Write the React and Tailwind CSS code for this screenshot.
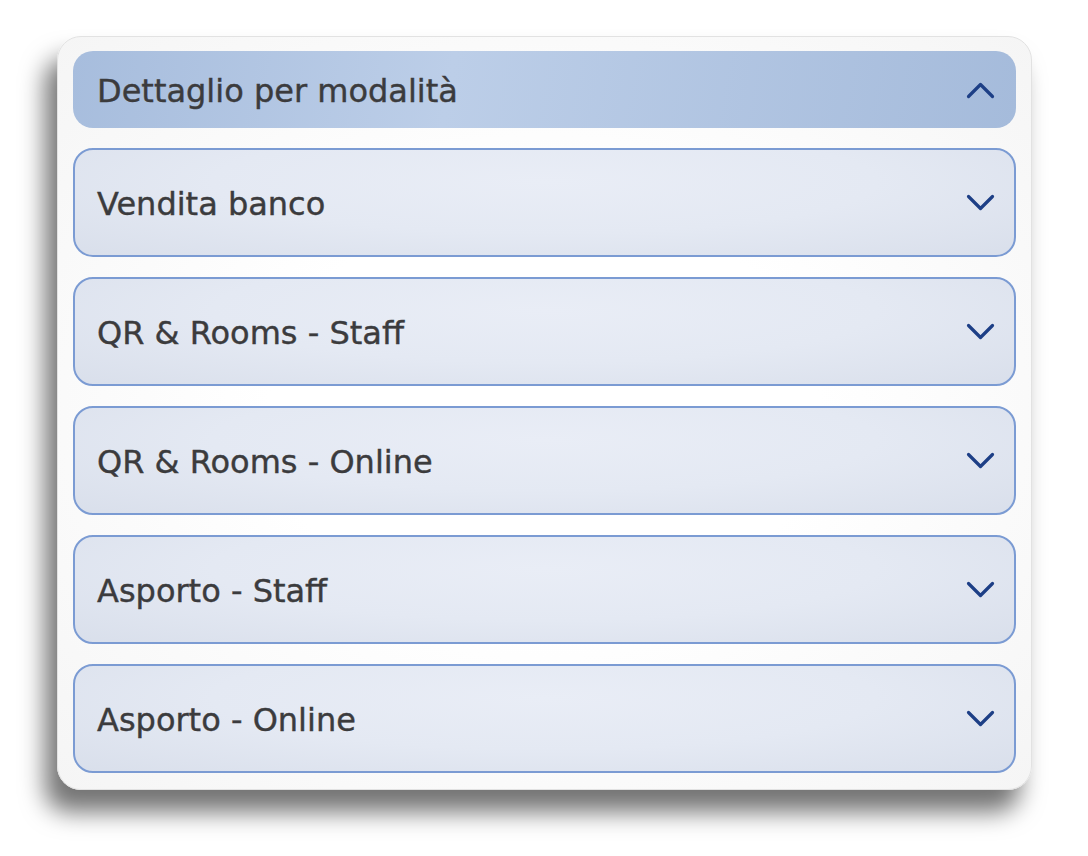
import React, {useState} from "react";

const items = [
    "Vendita banco",
    "QR & Rooms - Staff",
    "QR & Rooms - Online",
    "Asporto - Staff",
    "Asporto - Online",
];

const Chevron = ({up}) => (
    <svg width="30" height="30" viewBox="0 0 30 30" fill="none" stroke="#1d3f86" strokeWidth="3.2"
         strokeLinecap="round" strokeLinejoin="round">
        {up ? <path d="M3.5 21.5l12-12 12 12"/> : <path d="M3.5 8.5l12 12 12-12"/>}
    </svg>
);

const App = () => {
    const [open, setOpen] = useState(true);

    return (
        <div className="w-[1088px] h-[856px] bg-white pt-[36px] pl-[57px]"
             style={{fontFamily: '"DejaVu Sans", sans-serif'}}>
            <div
                className="w-[975px] rounded-[24px] border border-[#e2e2e2] bg-[radial-gradient(ellipse_at_center,#ffffff_40%,#f5f5f5_100%)] px-[15px] pt-[14px] pb-[16px] shadow-[-12px_22px_24px_rgba(0,0,0,0.55)]">
                <button
                    onClick={() => setOpen(!open)}
                    className="w-full h-[77px] rounded-[20px] flex items-center justify-between pl-[24px] pr-[21px] bg-[linear-gradient(100deg,#a7bddd_0%,#bccee8_40%,#a5bbdb_100%)]">
                    <span className="text-[32px] leading-none pt-[2px] text-[#3b3b3d] [-webkit-text-stroke:0.4px_#3b3b3d]">Dettaglio per modalità</span>
                    <Chevron up={open}/>
                </button>
                {open && (
                    <div className="flex flex-col gap-[20px] mt-[20px]">
                        {items.map((item) => (
                            <div key={item}
                                 className="h-[109px] rounded-[20px] border-2 border-[#7b9bd3] flex items-center justify-between pl-[22px] pr-[19px] bg-[radial-gradient(ellipse_at_50%_30%,#e9edf6_0%,#e4e9f3_50%,#d9dfeb_100%)]">
                                <span className="text-[32px] leading-none pt-[3px] text-[#3b3b3d] [-webkit-text-stroke:0.4px_#3b3b3d]">{item}</span>
                                <Chevron/>
                            </div>
                        ))}
                    </div>
                )}
            </div>
        </div>
    );
};

export default App;
